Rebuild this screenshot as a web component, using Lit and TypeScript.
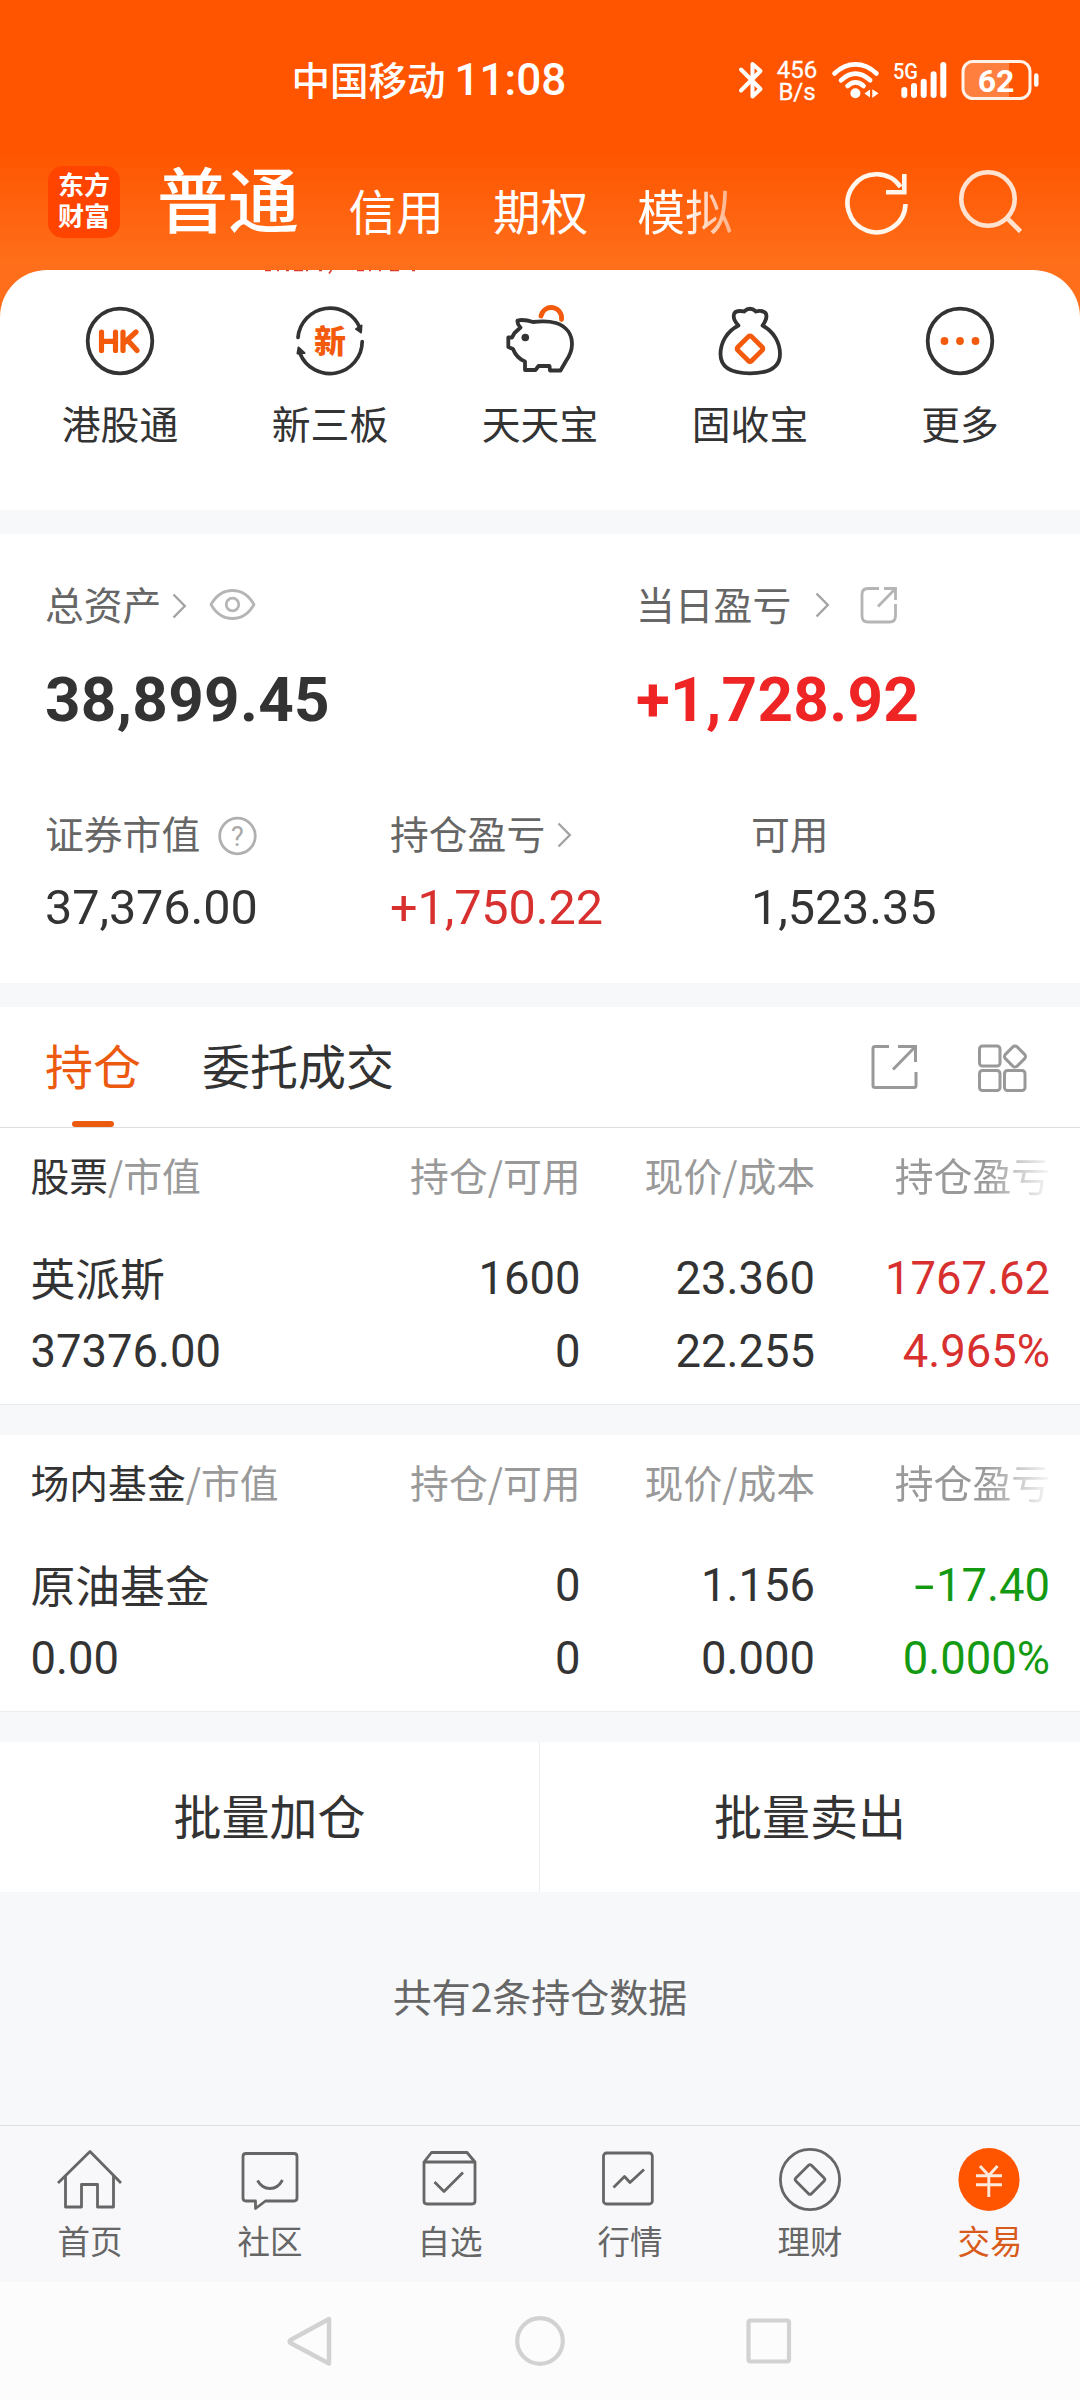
import { LitElement, html, css, svg, type TemplateResult, type SVGTemplateResult } from "lit";
import { customElement, property } from "lit/decorators.js";
import { classMap } from "lit/directives/class-map.js";

/** Draws strokes given in screen units, cropped to the given box. */
const icon = (x: number, y: number, w: number, h: number, body: SVGTemplateResult): TemplateResult =>
  html`<svg class="icon" width=${w} height=${h} viewBox="${x} ${y} ${w} ${h}" fill="none">${body}</svg>`;

/* ---------- status bar ---------- */
const bluetooth = icon(736, 58, 26, 42, svg`
  <path d="M739 68.5L758.5 88L750.5 95.5V63L758.5 70L739 89.5" stroke="#fff" stroke-width="4" stroke-linecap="round" stroke-linejoin="round"/>`);
const wifi = icon(830, 58, 52, 42, svg`
  <g stroke="#fff" stroke-width="4.6" stroke-linecap="round">
    <path d="M834.5 72.5Q844 63.4 855.5 63.4T876.5 72.5"/>
    <path d="M841 79.3Q848 72.6 855.5 72.6T870.2 79.3"/>
    <path d="M847.5 85Q851.3 81.4 855.5 81.4T863.6 85"/>
  </g>
  <circle cx="855.4" cy="92.3" r="5" fill="#fff"/>
  <path d="M864.5 92.5L870 88.5V96.5ZM872.3 88.2L878.5 92.2L872.3 97Z" fill="#fff"/>`);
const signal = icon(892, 58, 58, 42, svg`
  <text x="893" y="77.5" font-family="Roboto, sans-serif" font-size="22" font-weight="500" fill="#fff" textLength="25" lengthAdjust="spacingAndGlyphs">5G</text>
  <path d="M904.3 89V94M914 85V94M923.7 80.7V94M933.6 73.3V94M943.3 64V94" stroke="#fff" stroke-width="6" stroke-linecap="round"/>`);
const battery = icon(960, 56, 80, 46, svg`
  <path d="M972 62H1009V96H972Q964 96 964 86V72Q964 62 972 62Z" fill="#ff7f3f"/>
  <rect x="963" y="60.5" width="67" height="37" rx="10" stroke="#fff2e8" stroke-width="3"/>
  <path d="M1036.3 74.5V83.5" stroke="#fff" stroke-width="4.4" stroke-linecap="round"/>
  <text x="996" y="90.5" text-anchor="middle" font-family="Roboto, sans-serif" font-size="32" font-weight="700" fill="#fff">62</text>`);

/* ---------- header ---------- */
const refresh = icon(842, 168, 68, 68, svg`
  <g stroke="#fff6ee" stroke-width="4.6">
    <path d="M904.5 204A29 29 0 1 1 899.5 187"/>
    <path d="M903.3 174V192.2H885"/>
  </g>`);
const search = icon(954, 166, 70, 70, svg`
  <g stroke="#ffe2d0" stroke-width="4.6"><circle cx="987" cy="199" r="26.7"/><path d="M1005.5 217.5L1019.5 231.5"/></g>`);

/* ---------- shortcuts ---------- */
const DARK = "#333";
const ORANGE = "#f35a0c";
const hk = icon(80, 301, 80, 80, svg`
  <circle cx="120" cy="341" r="32.3" stroke=${DARK} stroke-width="3.8"/>
  <path d="M101.5 332V350.5M115.5 332V350.5M101.5 341.3H115.5M123 332V350.5M136 332L124.5 342.5M128 340.5L137 350.5" stroke=${ORANGE} stroke-width="5.2" stroke-linecap="round" stroke-linejoin="round"/>`);
const xin = icon(290, 301, 80, 80, svg`
  <g stroke=${DARK} stroke-width="3.7" stroke-linecap="round">
    <path d="M298 337.5A32.3 32.3 0 0 1 360 328"/>
    <path d="M362.2 341.5A32.3 32.3 0 0 1 300 353.5"/>
  </g>
  <path d="M356 329L361.500 325.500L361 332.500ZM298.500 347.500L304.500 353L297.500 353.500Z" fill=${DARK} stroke=${DARK} stroke-width="2" stroke-linejoin="round"/>
  <text x="330" y="352.5" text-anchor="middle" font-family="Noto Sans CJK SC, sans-serif" font-size="32" font-weight="900" fill=${ORANGE}>新</text>`);
const pig = icon(500, 301, 80, 80, svg`
  <path d="M541 316A10.400 10.400 0 0 1 561.500 319.500" stroke=${ORANGE} stroke-width="4.800" stroke-linecap="round"/>
  <path d="M517.500 320.500Q524 319 533 322Q547 320.500 556 323C567 326.500 572 335 572 344C572 351 569.500 356 566 361L560.500 370.500H550L549.500 366H538.500L535.500 370H525V361.500C519 359 515 354.500 513 349L508.300 347V337.500H512L514.500 333L520.500 327.500Q517 324 517.500 320.500Z" stroke=${DARK} stroke-width="3.800" stroke-linejoin="round"/>
  <circle cx="525.300" cy="337.500" r="3.800" fill=${DARK}/>`);
const bag = icon(710, 301, 80, 80, svg`
  <path d="M738.500 325.500C731.500 318 732.500 311 739.500 311Q742 311 744 311.500Q750 306 756 311.500Q759 310.500 761 311C768 311.500 768 318 762.500 325.500C774 331.500 780 343 780 354C780 368 768 373.300 750 373.300C732 373.300 720.500 368 720.500 354C720.500 343 726.500 331.500 738.500 325.500Z" stroke=${DARK} stroke-width="3.800" stroke-linejoin="round"/>
  <rect x="740.300" y="339" width="19.400" height="19.400" rx="2" stroke=${ORANGE} stroke-width="4.800" transform="rotate(45 750 348.700)"/>`);
const more = icon(920, 301, 80, 80, svg`
  <circle cx="960" cy="341" r="32.3" stroke=${DARK} stroke-width="3.8"/>
  <g fill=${ORANGE}><circle cx="944.5" cy="341" r="3.9"/><circle cx="960" cy="341" r="3.9"/><circle cx="975.5" cy="341" r="3.9"/></g>`);

/* Bottom edge of the notice line that has scrolled under the header. */
const notice = icon(262, 270, 160, 5, svg`
  <path d="M265 270.5H271M277 270.5H279M286 270.5H289M294 270.5H303M306 270.5H308M319 270.5H322M357 270.5H364M369 270.5H371M379 270.5H381M390 270.5H399M412 270.5H415M331.500 270L329 273.500" stroke="#dc3a2a" stroke-width="1.6"/>`);

/* ---------- assets ---------- */
const chevron = icon(0, 0, 16, 28, svg`<path d="M1.500 2.500L12.800 14L1.500 25.500" stroke="#a3a3a3" stroke-width="2.400"/>`);
const eye = icon(210, 584, 50, 40, svg`
  <g stroke="#b5b5b5" stroke-width="2.8"><path d="M213 604.5Q221 590.5 234.5 590.5T256 604.5Q248 618.5 234.5 618.5T213 604.5Z" stroke-linejoin="round"/><circle cx="234.5" cy="604.5" r="6.3"/></g>`);
const shareRound = icon(858, 585, 42, 40, svg`
  <g stroke="#b5b5b5" stroke-width="2.8"><path d="M879 588.5H868Q862 588.5 862 594.5V616Q862 622 868 622H889.5Q895.5 622 895.5 616V604"/><path d="M884 588.5H895.5V600M895.5 588.5L878 606.5"/></g>`);
const help = icon(215, 814, 44, 44, svg`
  <circle cx="236.5" cy="836" r="17.8" stroke="#b0b0b0" stroke-width="2.8"/>
  <text x="236.5" y="845.5" text-anchor="middle" font-family="Roboto, sans-serif" font-size="27" fill="#a8a8a8">?</text>`);

/* ---------- tabs ---------- */
const share = icon(868, 1040, 52, 52, svg`
  <g stroke="#999" stroke-width="3"><path d="M889 1046.5H875Q873 1046.5 873 1048.5V1085.5Q873 1087.5 875 1087.5H914Q916 1087.5 916 1085.5V1072"/><path d="M898 1046.5H915.5V1062M915 1047L893 1069.5"/></g>`);
const grid = icon(974, 1040, 56, 56, svg`
  <g stroke="#999" stroke-width="3"><rect x="979.5" y="1046" width="20.5" height="20" rx="3"/><rect x="979.5" y="1070.5" width="20.5" height="20" rx="3"/><rect x="1004.5" y="1070.5" width="20.5" height="20" rx="3"/><rect x="1006.7" y="1048.2" width="16.6" height="16.6" rx="3" transform="rotate(45 1015 1056.5)"/></g>`);

/* ---------- bottom navigation ---------- */
const LINE = "#666";
const home = icon(50, 2140, 80, 72, svg`
  <g stroke=${LINE} stroke-width="2.8" stroke-linejoin="round"><path d="M58 2183L90 2151.5L121 2183"/><path d="M65.5 2176V2207H81.5V2184.5H97.5V2207H113.5V2176"/></g>`);
const community = icon(230, 2140, 80, 72, svg`
  <g stroke=${LINE} stroke-width="2.8" stroke-linejoin="round"><path d="M246 2153.5H294Q297 2153.5 297 2156.5V2198Q297 2201 294 2201H265.5L255.5 2208.5V2201H246Q243 2201 243 2198V2156.5Q243 2153.5 246 2153.5Z"/><path d="M257.5 2180.5Q262 2188.5 270 2188.5T282.5 2180"/></g>`);
const watch = icon(411.5, 2140, 80, 72, svg`
  <path d="M433 2152.5H468.5L476.5 2162V2201Q476.5 2204 473.5 2204H428.5Q425.5 2204 425.5 2201V2162ZM425.5 2162H476.5M436 2182L445.500 2191.500L464.500 2172.500" stroke=${LINE} stroke-width="2.8" stroke-linejoin="round"/>`);
const market = icon(589, 2140, 80, 72, svg`
  <g stroke=${LINE} stroke-width="2.8" stroke-linejoin="round"><rect x="602.5" y="2153" width="48.8" height="51" rx="3"/><path d="M612.5 2187.5L623.5 2176.5L629 2182.5L643 2169.5"/></g>`);
const wealth = icon(770, 2140, 80, 72, svg`
  <g stroke=${LINE} stroke-width="2.8" stroke-linejoin="round"><ellipse cx="810" cy="2179.5" rx="29.6" ry="30.2"/><rect x="799" y="2168.5" width="22" height="22" rx="2" transform="rotate(45 810 2179.5)"/></g>`);
const trade = icon(951, 2140, 80, 72, svg`
  <ellipse cx="990" cy="2179.5" rx="30.6" ry="31.5" fill="#ff5500"/>
  <path d="M981 2166L989.8 2175.5L998.5 2166M977 2175.8H1003M977 2184.8H1003M989.8 2175.5V2197" stroke="#ffe9dc" stroke-width="2.9"/>`);

const back = icon(280, 2308, 60, 66, svg`<path d="M328 2319V2363.500L289.500 2343Q288 2341.500 289.500 2340Z" stroke="#d2d2d2" stroke-width="4.500" stroke-linejoin="round"/>`);
const circle = icon(510, 2308, 60, 66, svg`<circle cx="540" cy="2341" r="22.8" stroke="#d2d2d2" stroke-width="4.2"/>`);
const square = icon(740.5, 2308, 60, 66, svg`<rect x="749" y="2320.5" width="40.5" height="41" rx="2" stroke="#d2d2d2" stroke-width="4.2"/>`);

const CJK = css`"Noto Sans CJK SC", "Liberation Sans", sans-serif`;
const NUM = css`Roboto, "Noto Sans CJK SC", sans-serif`;

interface Holding {
  kind: string;
  name: string;
  value: string;
  amount: string;
  available: string;
  price: string;
  cost: string;
  profit: string;
  rate: string;
  trend: "up" | "down";
}

@customElement("holding-table")
class HoldingTable extends LitElement {
  @property({ attribute: false }) item!: Holding;

  static styles = css`
    :host { display: block; height: 277px; background: #fff; border-bottom: 1px solid #ebecee; }
    .line { display: grid; grid-template-columns: 261px 289px 234.5px 235px; padding: 0 30px 0 30.5px; text-align: right; white-space: nowrap; }
    .line > :first-child { text-align: left; }
    .head { font: 38.8px/92px ${CJK}; color: #999; margin-bottom: 22px; }
    .kind { color: #333; }
    .fade { -webkit-mask-image: linear-gradient(90deg, #000 170px, transparent 240px); mask-image: linear-gradient(90deg, #000 170px, transparent 240px); }
    .row { font: 45.4px/73px ${NUM}; color: #333; }
    .name { font-size: 44.8px; padding-top: 2px; margin-bottom: -2px; }
    .up { color: #d7302f; }
    .down { color: #149a12; }
    .sign { display: inline-block; transform: scaleX(1.6); margin-right: 5px; }
  `;

  render() {
    const h = this.item;
    const trend = classMap({ up: h.trend === "up", down: h.trend === "down" });
    const profit = h.profit.startsWith("-") ? html`<span class="sign">-</span>${h.profit.slice(1)}` : h.profit;
    return html`
      <div class="line head"><span><span class="kind">${h.kind}</span>/市值</span><span>持仓/可用</span><span>现价/成本</span><span class="fade">持仓盈亏</span></div>
      <div class="line row"><span class="name">${h.name}</span><span>${h.amount}</span><span>${h.price}</span><span class=${trend}>${profit}</span></div>
      <div class="line row"><span>${h.value}</span><span>${h.available}</span><span>${h.cost}</span><span class=${trend}>${h.rate}</span></div>
    `;
  }
}

@customElement("app-root")
class AppRoot extends LitElement {
  static styles = css`
    :host { display: block; width: 1080px; height: 2400px; overflow: hidden; background: #f7f8fa; font-family: ${CJK}; color: #333; }
    * { box-sizing: border-box; }
    .icon { display: block; flex: none; }
    .header { height: 320px; margin-bottom: -50px; background: linear-gradient(180deg, #ff5500 0, #ff5500 150px, #ff6e1a 262px); color: #fff; }
    .status { height: 112px; padding: 48px 40px 0 291.5px; display: flex; align-items: center; }
    .carrier { font-size: 38.5px; font-weight: 500; line-height: 60px; margin-top: -4px; }
    .clock { font: 500 44px/60px ${NUM}; margin-left: 9px; }
    .indicators { margin-left: auto; display: flex; align-items: center; }
    .speed { font: 24px/22px ${NUM}; text-align: center; width: 46px; margin: 1px 10px 0 10px; -webkit-text-stroke: 0.3px #fff; }
    .signal { margin: 0 10px; }
    .bar { display: flex; align-items: flex-start; padding-left: 48px; }
    .logo { width: 72px; height: 72px; margin-top: 54px; border-radius: 15px; background: #ff4400; font: 700 26px/30.5px ${NUM}; padding: 5px 0 0 10px; }
    .logo span { display: block; white-space: nowrap; }
    .current { font-size: 71px; font-weight: 500; line-height: 80px; margin: 44px 0 0 37px; }
    .accounts { display: flex; gap: 49px; margin: 68px 0 0 49.5px; font-size: 47.7px; line-height: 60px; }
    .last { -webkit-mask-image: linear-gradient(90deg, #000 45px, rgba(0, 0, 0, 0.5) 94px); mask-image: linear-gradient(90deg, #000 45px, rgba(0, 0, 0, 0.5) 94px); }
    .refresh { margin: 56px 0 0 110.5px; }
    .search { margin: 54px 0 0 44px; }
    .quick { position: relative; height: 240px; background: #fff; border-radius: 47px 47px 0 0; padding: 31px 15px 0; display: grid; grid-template-columns: repeat(5, 210px); }
    .peek { position: absolute; left: 262px; top: 0; }
    .shortcut { display: flex; flex-direction: column; align-items: center; font-size: 38.8px; line-height: 50px; gap: 16px; }
    .assets { margin-top: 24px; height: 449px; background: #fff; padding: 43.5px 0 0 45px; }
    .top { display: grid; grid-template-columns: 591px 1fr; }
    .bottom { display: grid; grid-template-columns: 345px 361px 1fr; margin-top: 71.5px; }
    .label { display: flex; align-items: center; height: 50px; font-size: 38.8px; line-height: 50px; color: #666; }
    .mark-total { margin: 6px 0 0 10.5px; }
    .mark-eye { margin: 2px 0 0 20.5px; }
    .mark-day { margin: 4px 0 0 23.5px; }
    .mark-share { margin: 5px 0 0 27px; }
    .mark-help { margin: 8px 0 0 15.5px; }
    .mark-hold { margin: 6px 0 0 12px; }
    .total { font: 700 62px/70px ${NUM}; margin-top: 37.5px; letter-spacing: 0.3px; }
    .figure { font: 48.6px/60px ${NUM}; margin-top: 21px; letter-spacing: -0.1px; }
    .hot { color: #ef2424; }
    .warm { color: #d7302f; }
    .tabs { margin-top: 24px; height: 121px; background: #fff; border-bottom: 1px solid #dedede; display: flex; padding: 0 50px 0 45px; font-size: 48px; line-height: 114px; }
    .tab { margin-right: 61px; }
    .active { color: #ec5a10; display: flex; flex-direction: column; align-items: center; }
    .active::after { content: ""; width: 42px; height: 6px; border-radius: 3px; background: #ec5a10; }
    .tools { margin: 33px 0 0 auto; display: flex; gap: 54px; }
    .gap { height: 30px; }
    .actions { display: flex; height: 150px; background: #fff; font-size: 48px; line-height: 144px; text-align: center; }
    .action { width: 540px; }
    .action:first-child { border-right: 1px solid #ededed; }
    .summary { height: 233px; padding-top: 78px; text-align: center; font-size: 39px; line-height: 50px; color: #666; }
    .nav { height: 157px; border-top: 1px solid #dfe0e2; background: #f8f8fa; padding-top: 14px; display: grid; grid-template-columns: repeat(6, 180px); font-size: 32.5px; line-height: 44px; color: #666; }
    .item { display: flex; flex-direction: column; align-items: center; gap: 6px; }
    .chosen { color: #d95b1c; }
    .system { height: 118px; background: #fcfcfc; padding-top: 26px; display: flex; justify-content: center; gap: 169.5px; }
  `;

  private holdings: Holding[] = [
    { kind: "股票", name: "英派斯", value: "37376.00", amount: "1600", available: "0", price: "23.360", cost: "22.255", profit: "1767.62", rate: "4.965%", trend: "up" },
    { kind: "场内基金", name: "原油基金", value: "0.00", amount: "0", available: "0", price: "1.156", cost: "0.000", profit: "-17.40", rate: "0.000%", trend: "down" },
  ];

  private shortcuts: [TemplateResult, string][] = [[hk, "港股通"], [xin, "新三板"], [pig, "天天宝"], [bag, "固收宝"], [more, "更多"]];
  private pages: [TemplateResult, string][] = [[home, "首页"], [community, "社区"], [watch, "自选"], [market, "行情"], [wealth, "理财"], [trade, "交易"]];

  render() {
    return html`
      <div class="header">
        <div class="status">
          <span class="carrier">中国移动</span><span class="clock">11:08</span>
          <div class="indicators">${bluetooth}<div class="speed">456<br />B/s</div>${wifi}<div class="signal">${signal}</div>${battery}</div>
        </div>
        <div class="bar">
          <div class="logo"><span>东方</span><span>财富</span></div>
          <div class="current">普通</div>
          <div class="accounts"><span>信用</span><span>期权</span><span class="last">模拟</span></div>
          <div class="refresh">${refresh}</div>
          <div class="search">${search}</div>
        </div>
      </div>
      <div class="quick">
        <div class="peek">${notice}</div>
        ${this.shortcuts.map(([glyph, label]) => html`<div class="shortcut">${glyph}<span>${label}</span></div>`)}
      </div>
      <div class="assets">
        <div class="top">
          <div>
            <div class="label">总资产<span class="mark-total">${chevron}</span><span class="mark-eye">${eye}</span></div>
            <div class="total">38,899.45</div>
          </div>
          <div>
            <div class="label">当日盈亏<span class="mark-day">${chevron}</span><span class="mark-share">${shareRound}</span></div>
            <div class="total hot">+1,728.92</div>
          </div>
        </div>
        <div class="bottom">
          <div><div class="label">证券市值<span class="mark-help">${help}</span></div><div class="figure">37,376.00</div></div>
          <div><div class="label">持仓盈亏<span class="mark-hold">${chevron}</span></div><div class="figure warm">+1,750.22</div></div>
          <div><div class="label">可用</div><div class="figure">1,523.35</div></div>
        </div>
      </div>
      <div class="tabs">
        <span class="tab active">持仓</span><span class="tab">委托成交</span>
        <div class="tools">${share}${grid}</div>
      </div>
      ${this.holdings.map((h) => html`<holding-table .item=${h}></holding-table><div class="gap"></div>`)}
      <div class="actions"><div class="action">批量加仓</div><div class="action">批量卖出</div></div>
      <div class="summary">共有2条持仓数据</div>
      <div class="nav">
        ${this.pages.map(([glyph, label]) => html`<div class=${classMap({ item: true, chosen: label === "交易" })}>${glyph}<span>${label}</span></div>`)}
      </div>
      <div class="system">${back}${circle}${square}</div>
    `;
  }
}
